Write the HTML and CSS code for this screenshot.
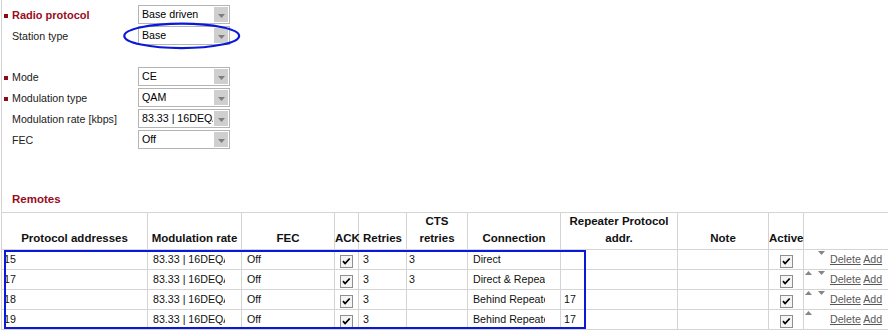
FILE: index.html
```html
<!DOCTYPE html>
<html>
<head>
    <meta charset="utf-8">
    <link rel="stylesheet" href="styles.css">
</head>
<body>
    <div class="page">
        <div class="form">
            <div class="row">
                <span class="mark"></span>
                <span class="label head">Radio protocol</span>
                <div class="sel"><span class="sel-val">Base driven</span><span class="sel-btn"><svg width="7" height="4" viewBox="0 0 7 4"><path d="M0 0h7L3.5 4z"/></svg></span></div>
            </div>
            <div class="row">
                <span class="mark none"></span>
                <span class="label">Station type</span>
                <div class="sel"><span class="sel-val">Base</span><span class="sel-btn"><svg width="7" height="4" viewBox="0 0 7 4"><path d="M0 0h7L3.5 4z"/></svg></span></div>
            </div>
            <div class="gap"></div>
            <div class="row">
                <span class="mark"></span>
                <span class="label">Mode</span>
                <div class="sel"><span class="sel-val">CE</span><span class="sel-btn"><svg width="7" height="4" viewBox="0 0 7 4"><path d="M0 0h7L3.5 4z"/></svg></span></div>
            </div>
            <div class="row">
                <span class="mark"></span>
                <span class="label">Modulation type</span>
                <div class="sel"><span class="sel-val">QAM</span><span class="sel-btn"><svg width="7" height="4" viewBox="0 0 7 4"><path d="M0 0h7L3.5 4z"/></svg></span></div>
            </div>
            <div class="row">
                <span class="mark none"></span>
                <span class="label">Modulation rate [kbps]</span>
                <div class="sel"><span class="sel-val">83.33 | 16DEQAM</span><span class="sel-btn"><svg width="7" height="4" viewBox="0 0 7 4"><path d="M0 0h7L3.5 4z"/></svg></span></div>
            </div>
            <div class="row">
                <span class="mark none"></span>
                <span class="label">FEC</span>
                <div class="sel"><span class="sel-val">Off</span><span class="sel-btn"><svg width="7" height="4" viewBox="0 0 7 4"><path d="M0 0h7L3.5 4z"/></svg></span></div>
            </div>
        </div>

        <h3 class="section">Remotes</h3>

        <table class="remotes">
            <colgroup>
                <col style="width:146px"><col style="width:94px"><col style="width:93px"><col style="width:24px">
                <col style="width:48px"><col style="width:61px"><col style="width:93px"><col style="width:117px">
                <col style="width:91px"><col style="width:35px"><col style="width:90px">
            </colgroup>
            <tr>
                <th>Protocol addresses</th>
                <th>Modulation rate</th>
                <th>FEC</th>
                <th>ACK</th>
                <th>Retries</th>
                <th>CTS retries</th>
                <th>Connection</th>
                <th>Repeater Protocol addr.</th>
                <th>Note</th>
                <th>Active</th>
                <th></th>
            </tr>
            <tr>
                <td class="c-addr">15</td>
                <td class="c-rate"><span class="clip">83.33 | 16DEQAM</span></td>
                <td class="c-fec">Off</td>
                <td class="c-box"><svg class="cb" width="13" height="13" viewBox="0 0 13 13"><rect x=".5" y=".5" width="12" height="12"/><path d="M3 6.2l2.1 2.3 4.6-5"/></svg></td>
                <td class="c-ret">3</td>
                <td class="c-cts">3</td>
                <td class="c-conn"><span class="clip">Direct</span></td>
                <td class="c-rep"></td>
                <td></td>
                <td class="c-box"><svg class="cb" width="13" height="13" viewBox="0 0 13 13"><rect x=".5" y=".5" width="12" height="12"/><path d="M3 6.2l2.1 2.3 4.6-5"/></svg></td>
                <td class="c-act"><div class="act">
                    <span class="arr"></span>
                    <span class="arr"><svg width="7" height="4" viewBox="0 0 7 4"><path d="M0 0h7L3.5 4z"/></svg></span>
                    <span class="links"><a href="#">Delete</a> <a href="#">Add</a></span>
                </div></td>
            </tr>
            <tr>
                <td class="c-addr">17</td>
                <td class="c-rate"><span class="clip">83.33 | 16DEQAM</span></td>
                <td class="c-fec">Off</td>
                <td class="c-box"><svg class="cb" width="13" height="13" viewBox="0 0 13 13"><rect x=".5" y=".5" width="12" height="12"/><path d="M3 6.2l2.1 2.3 4.6-5"/></svg></td>
                <td class="c-ret">3</td>
                <td class="c-cts">3</td>
                <td class="c-conn"><span class="clip">Direct &amp; Repeater</span></td>
                <td class="c-rep"></td>
                <td></td>
                <td class="c-box"><svg class="cb" width="13" height="13" viewBox="0 0 13 13"><rect x=".5" y=".5" width="12" height="12"/><path d="M3 6.2l2.1 2.3 4.6-5"/></svg></td>
                <td class="c-act"><div class="act">
                    <span class="arr"><svg width="7" height="4" viewBox="0 0 7 4"><path d="M0 4h7L3.5 0z"/></svg></span>
                    <span class="arr"><svg width="7" height="4" viewBox="0 0 7 4"><path d="M0 0h7L3.5 4z"/></svg></span>
                    <span class="links"><a href="#">Delete</a> <a href="#">Add</a></span>
                </div></td>
            </tr>
            <tr>
                <td class="c-addr">18</td>
                <td class="c-rate"><span class="clip">83.33 | 16DEQAM</span></td>
                <td class="c-fec">Off</td>
                <td class="c-box"><svg class="cb" width="13" height="13" viewBox="0 0 13 13"><rect x=".5" y=".5" width="12" height="12"/><path d="M3 6.2l2.1 2.3 4.6-5"/></svg></td>
                <td class="c-ret">3</td>
                <td class="c-cts"></td>
                <td class="c-conn"><span class="clip">Behind Repeater</span></td>
                <td class="c-rep">17</td>
                <td></td>
                <td class="c-box"><svg class="cb" width="13" height="13" viewBox="0 0 13 13"><rect x=".5" y=".5" width="12" height="12"/><path d="M3 6.2l2.1 2.3 4.6-5"/></svg></td>
                <td class="c-act"><div class="act">
                    <span class="arr"><svg width="7" height="4" viewBox="0 0 7 4"><path d="M0 4h7L3.5 0z"/></svg></span>
                    <span class="arr"><svg width="7" height="4" viewBox="0 0 7 4"><path d="M0 0h7L3.5 4z"/></svg></span>
                    <span class="links"><a href="#">Delete</a> <a href="#">Add</a></span>
                </div></td>
            </tr>
            <tr>
                <td class="c-addr">19</td>
                <td class="c-rate"><span class="clip">83.33 | 16DEQAM</span></td>
                <td class="c-fec">Off</td>
                <td class="c-box"><svg class="cb" width="13" height="13" viewBox="0 0 13 13"><rect x=".5" y=".5" width="12" height="12"/><path d="M3 6.2l2.1 2.3 4.6-5"/></svg></td>
                <td class="c-ret">3</td>
                <td class="c-cts"></td>
                <td class="c-conn"><span class="clip">Behind Repeater</span></td>
                <td class="c-rep">17</td>
                <td></td>
                <td class="c-box"><svg class="cb" width="13" height="13" viewBox="0 0 13 13"><rect x=".5" y=".5" width="12" height="12"/><path d="M3 6.2l2.1 2.3 4.6-5"/></svg></td>
                <td class="c-act"><div class="act">
                    <span class="arr"><svg width="7" height="4" viewBox="0 0 7 4"><path d="M0 4h7L3.5 0z"/></svg></span>
                    <span class="arr"></span>
                    <span class="links"><a href="#">Delete</a> <a href="#">Add</a></span>
                </div></td>
            </tr>
        </table>
    </div>

    <!-- hand-drawn markers over the screenshot -->
    <svg class="ring" width="124" height="32" viewBox="0 0 124 32"><ellipse cx="61.7" cy="15.9" rx="57.4" ry="12.2"/></svg>
    <div class="frame"></div>
</body>
</html>
```

FILE: styles.css
```css
* {margin: 0; padding: 0; box-sizing: border-box;}
html, body {
    overflow: hidden;
    background: #fff;
}
body {
    font-family: "Liberation Sans", Arial, sans-serif;
    font-size: 8pt;
    color: #222;
}

.page {
    margin-left: 1px;
    border-left: 1px solid #d4d4d4;
    height: 330px;
    padding-top: 4px;
}

/* settings form */
.row {
    display: flex;
    align-items: center;
    height: 21px;
    padding-left: 2px;
}
.gap { height: 20px; }

.mark {
    width: 4px;
    height: 4px;
    margin: 2px 4px 0 0;
    background: #8b0a14;
}
.mark.none { background: none; }

.label { width: 126px; }
.label.head {
    font-size: 11px;
    font-weight: bold;
    color: #990c1c;
}

.sel {
    display: flex;
    width: 92px;
    height: 19px;
    border: 1px solid #b4b4b4;
    background: #fff;
    color: #000;
}
.sel-val {
    flex: 1;
    overflow: hidden;
    white-space: nowrap;
    padding-left: 3px;
    line-height: 17px;
}
.sel-btn {
    width: 14px;
    margin: 1px;
    background: #cfcfcf;
    display: flex;
    align-items: center;
    justify-content: center;
    padding-top: 2px;
}
.sel-btn svg { fill: #7e7e7e; }

.section {
    margin: 40px 0 4px;
    padding-left: 10px;
    font-size: 11.5px;
    line-height: 18px;
    color: #990c1c;
}

/* remotes table */
.remotes {
    margin-left: -1px;
    width: 892px;
    table-layout: fixed;
    border-collapse: collapse;
    color: #111;
}
.remotes th, .remotes td {
    border: 1px solid #d4d4d4;
    padding: 0;
    white-space: nowrap;
    overflow: hidden;
}
.remotes th {
    font-size: 11.5px;
    line-height: 17px;
    height: 37px;
    vertical-align: bottom;
    padding-bottom: 2px;
    text-align: center;
    white-space: normal;
    overflow: visible;
    color: #111;
}
.remotes td {
    height: 19px;
    line-height: 17px;
}

.c-addr { padding-left: 2px !important; }
.c-rate { padding-left: 5px !important; }
.c-fec { padding-left: 5px !important; }
.c-ret { padding-left: 4px !important; }
.c-cts { padding-left: 2px !important; }
.c-conn { padding-left: 5px !important; }
.c-rep { padding-left: 3px !important; }

.clip {
    display: block;
    width: 72px;
    overflow: hidden;
}

.cb {
    display: block;
    margin: 5px auto 0;
}
.cb rect { fill: #f4f4f4; stroke: #8e8f8f; }
.cb path { fill: none; stroke: #000; stroke-width: 1.8; }
.c-box { vertical-align: top; }

.c-act {
    vertical-align: top;
    padding-left: 1px !important;
}
.act {
    display: flex;
    align-items: flex-start;
    height: 19px;
}
.arr {
    width: 13px;
    height: 5px;
    padding-top: 1px;
    display: flex;
}
.arr + .arr { width: 12px; }
.arr svg { fill: #858585; }
.links { line-height: 19px; }
.links a { color: #595959; }

/* annotations */
.ring {
    position: absolute;
    left: 120px;
    top: 20px;
}
.ring ellipse {
    fill: none;
    stroke: #0a18d8;
    stroke-width: 2.2;
}
.frame {
    position: absolute;
    left: 4px;
    top: 250px;
    width: 582px;
    height: 79px;
    border: 2px solid #0a18d8;
}
```
